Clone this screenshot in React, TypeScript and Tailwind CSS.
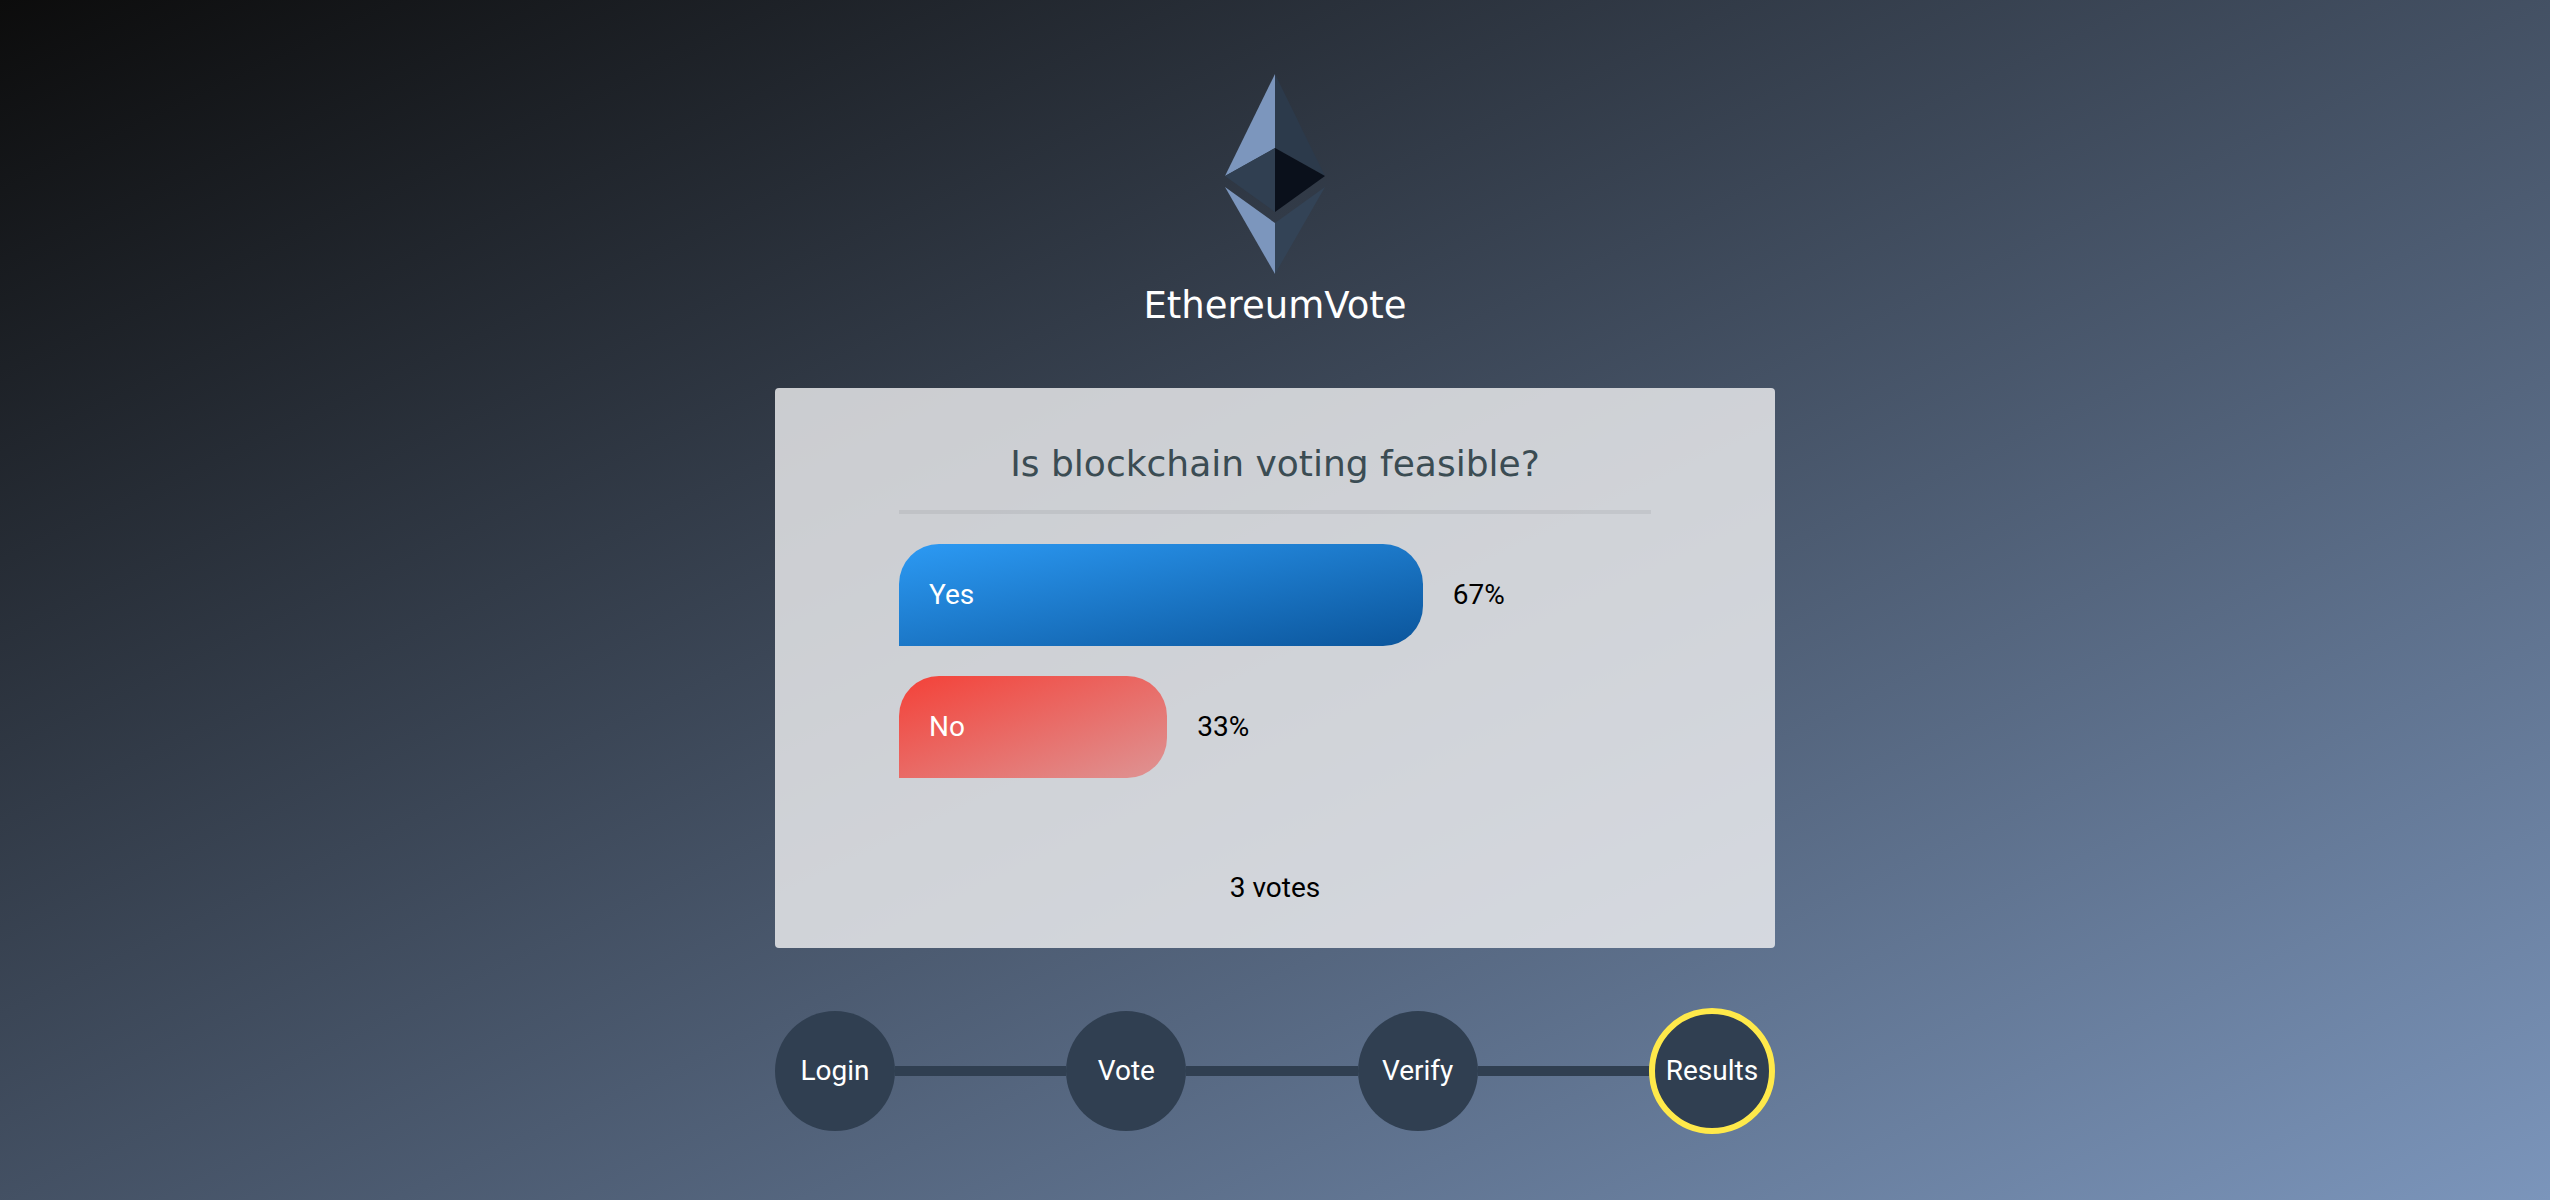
import { Fragment } from "react";

type Choice = { label: string; percent: number; fill: string };

const choices: Choice[] = [
  { label: "Yes", percent: 67, fill: "from-[#2c9af4] to-[#0b559b]" },
  { label: "No", percent: 33, fill: "from-[#f44138] to-[#de9494]" },
];

const steps = ["Login", "Vote", "Verify", "Results"];
const currentStep = "Results";

function EthereumLogo() {
  return (
    <svg viewBox="0 0 100 200" className="h-[200px] w-[100px]" role="img" aria-label="Ethereum">
      <polygon points="50,0 50,74 0,102" fill="#7c96bd" />
      <polygon points="50,0 100,102 50,74" fill="#2c3a4b" />
      <polygon points="50,74 50,138 0,102" fill="#303f51" />
      <polygon points="50,74 100,102 50,138" fill="#0a101b" />
      <polygon points="0,113 50,149 50,200" fill="#7c96bd" />
      <polygon points="100,113 50,149 50,200" fill="#334356" />
    </svg>
  );
}

function ResultBar({ label, percent, fill }: Choice) {
  return (
    <li className="flex items-center gap-[30px]">
      <div
        className={`flex h-[102px] items-center rounded-[40px] rounded-bl-none bg-linear-to-br/srgb px-[30px] text-white ${fill}`}
        style={{ width: `calc(${percent}% + 20px)` }}
      >
        {label}
      </div>
      <span>{percent}%</span>
    </li>
  );
}

function Step({ label, active }: { label: string; active: boolean }) {
  return (
    <button
      type="button"
      aria-current={active ? "step" : undefined}
      className={`flex shrink-0 items-center justify-center rounded-full bg-[#303f51] text-white ${
        active ? "size-[126px] border-6 border-[#ffe94a]" : "size-[120px]"
      }`}
    >
      {label}
    </button>
  );
}

export default function App() {
  return (
    <div className="flex min-h-screen flex-col items-center bg-linear-to-br/srgb from-[#0c0c0c] to-[#7b95bb] px-6 pt-[74px] pb-16 font-['Roboto',sans-serif] text-[28px] leading-10 text-black">
      <header className="flex flex-col items-center">
        <EthereumLogo />
        <h1 className="font-['DejaVu_Sans',sans-serif] text-[37px] leading-[64px] text-white">
          EthereumVote
        </h1>
      </header>

      <main className="mt-[50px] w-full max-w-[1000px]">
        <section className="rounded bg-[#f3f3f4]/80 px-[124px] pt-[46px] pb-10">
          <h2 className="text-center font-['DejaVu_Sans',sans-serif] text-[36px] leading-[60px] text-[#3b4c53]">
            Is blockchain voting feasible?
          </h2>
          <hr className="mt-4 h-1 border-0 bg-black/6" />
          <ul className="mt-[30px] flex flex-col gap-[30px]">
            {choices.map((choice) => (
              <ResultBar key={choice.label} {...choice} />
            ))}
          </ul>
          <p className="mt-[90px] text-center">3 votes</p>
        </section>

        <nav aria-label="Progress" className="mt-[60px] flex items-center">
          {steps.map((step, index) => (
            <Fragment key={step}>
              {index > 0 && <div className="h-2.5 flex-1 bg-[#303f51]" />}
              <Step label={step} active={step === currentStep} />
            </Fragment>
          ))}
        </nav>
      </main>
    </div>
  );
}
